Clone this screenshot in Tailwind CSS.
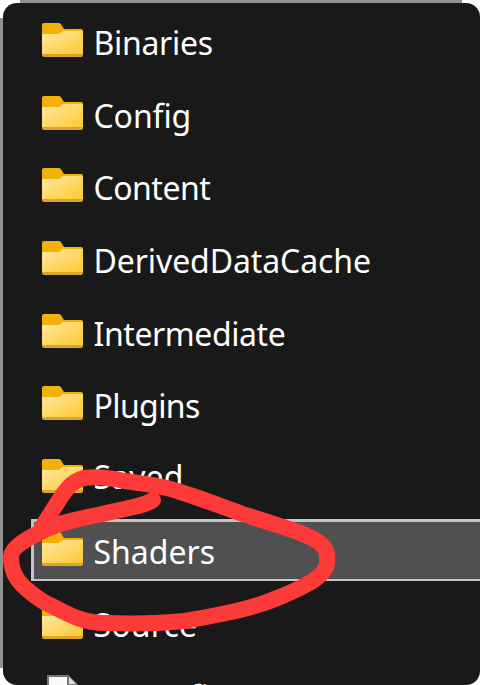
<!DOCTYPE html>
<html lang="en">
<head>
<meta charset="utf-8">
<title>Project folder</title>
<script src="https://cdn.jsdelivr.net/npm/@tailwindcss/browser@4"></script>
</head>
<body class="bg-white">
<svg class="absolute w-0 h-0">
  <defs>
    <linearGradient id="front" x1="0" y1="0" x2="1" y2="1"><stop offset="0" stop-color="#ffe8a3"/><stop offset="1" stop-color="#ffc933"/></linearGradient>
    <symbol id="folder" viewBox="0 0 41 34">
      <path fill="#f3b008" d="M0 2Q0 0 2 0H17Q19 0 20 3L22 6H39Q41 6 41 8V20H0Z"/>
      <path fill="#dda42a" d="M0 22H41V32Q41 34 39 34H2Q0 34 0 32Z"/>
      <path fill="url(#front)" d="M0 11H17L21 8H41V31H0Z"/>
    </symbol>
  </defs>
</svg>
<main class="relative w-[480px] h-[685px] overflow-hidden bg-white">
  <div class="absolute left-0 top-[18px] w-[3px] h-[650px] bg-[#919191]"></div>
  <div class="absolute left-[20px] top-0 w-[442px] h-[3px] bg-[#919191]"></div>
  <ul id="list" class="ml-[3px] mt-[3px] h-[682px] overflow-hidden rounded-[14px] bg-[#191919] pt-[2px] text-white text-[32px] leading-[76px] whitespace-nowrap"></ul>
  <div class="absolute left-0 top-0 w-full h-full">
    <svg width="480" height="685" viewBox="0 0 480 685" fill="none" stroke="#fc3a38" stroke-width="16" stroke-linecap="round" stroke-linejoin="round">
      <path d="M153 500C145 506 128 508 102 514C80 519 60 522 45 530C28 538 11 547 11 557C11 575 20 584 30 592C36 597 43 602 50 605C65 612 80 623 105 623C135 624 165 623 184 621C204 618 222 614 240 610C257 606 268 602 280 597C306 586 327 576 327 562V556C327 544 314 538 295 531C275 524 258 519 240 513C220 506 200 498 180 492C165 486 150 485 125 481C110 478 98 476 84 478C73 481 68 487 61 497L42 527"/>
    </svg>
  </div>
</main>
<script>
  // label and its letter spacing in px
  const rows = [['Binaries',-0.3],['Config',-0.1],['Content',-0.5],['DerivedDataCache',-0.1],['Intermediate',-0.42],['Plugins',-0.6],['Saved',0.1],['Shaders',0],['Source',0.15],['.vsconfig',0.2]];
  const list = document.getElementById('list');
  rows.forEach(([name, spacing], i) => {
    const li = document.createElement('li');
    li.className = 'relative flex items-start h-[72.7px]';
    const active = name === 'Shaders' ? '<div class="absolute left-[28px] top-[5px] w-[460px] h-[62px] border-2 border-t-3 border-l-3 border-[#c3c3c3] bg-[#505050]"></div>' : '';
    const icon = i < 9
      ? '<svg class="relative shrink-0 ml-[39px] mt-[18px] w-[41px] h-[34px]"><use href="#folder"/></svg>'
      : '<svg class="relative shrink-0 ml-[44px] mt-[16px] w-[36px] h-[40px]" viewBox="0 0 36 40"><path d="M1 1H21L30 10V39H1Z" fill="#fafafa" stroke="#77756f" stroke-width="2"/><path d="M21 1V10H30" fill="#ddd" stroke="#77756f" stroke-width="2"/></svg>';
    const shift = name === 'Saved' ? '-top-[2px]' : '';
    li.innerHTML = active + icon + '<span class="relative ml-[10.5px] h-[72px] font-[\'Noto_Sans_CJK_SC\',\'Noto_Sans\',sans-serif] ' + shift + '" style="letter-spacing:' + spacing + 'px">' + name + '</span>';
    list.appendChild(li);
  });
</script>
</body>
</html>
